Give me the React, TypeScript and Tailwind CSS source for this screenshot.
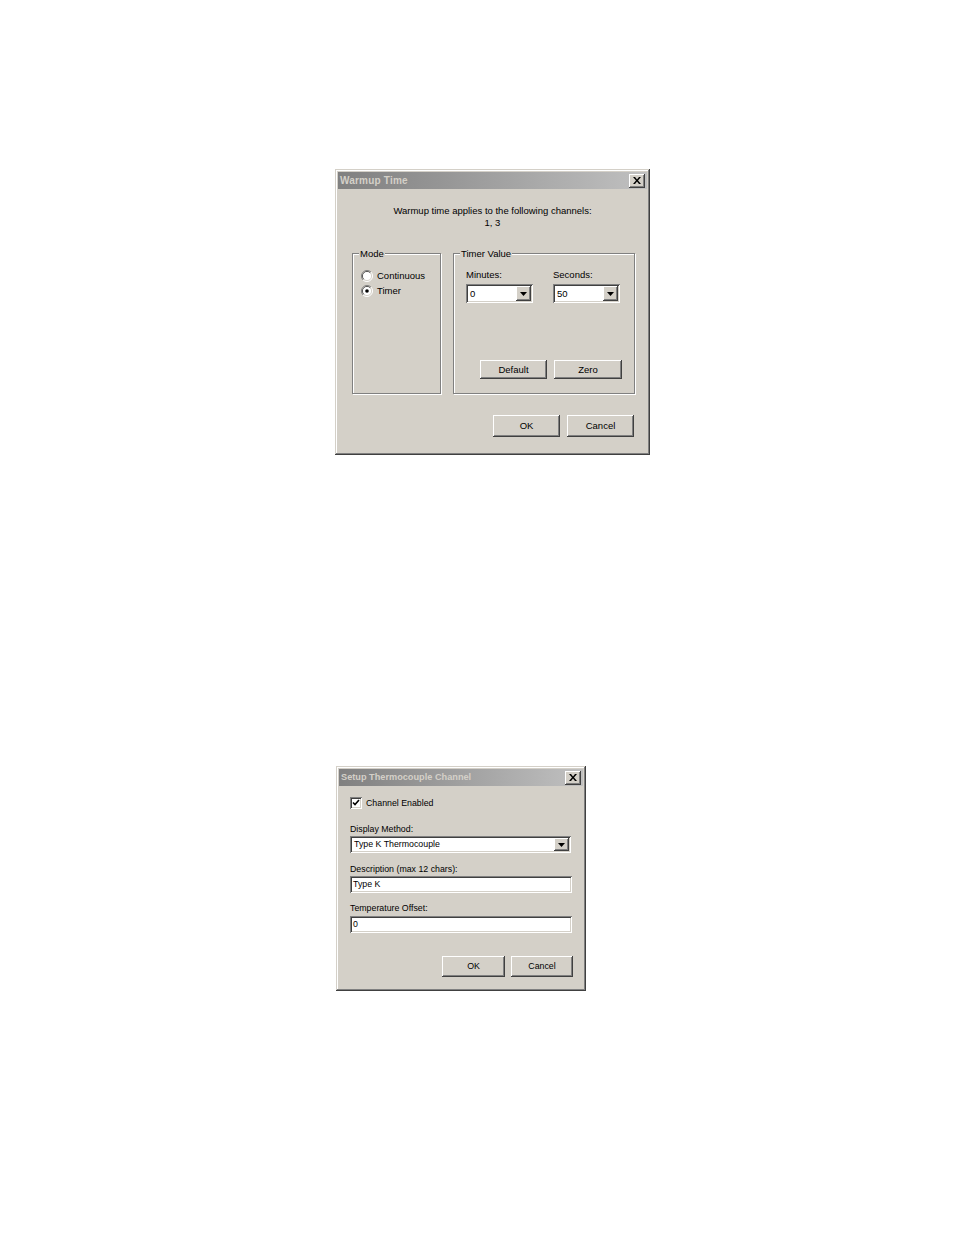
import React from "react";

const raised =
  "shadow-[inset_-1px_-1px_0_#404040,inset_1px_1px_0_#ffffff,inset_-2px_-2px_0_#808080,inset_2px_2px_0_#d4d0c8]";
const windowFrame =
  "shadow-[inset_-1px_-1px_0_#404040,inset_1px_1px_0_#d4d0c8,inset_-2px_-2px_0_#808080,inset_2px_2px_0_#ffffff]";
const sunken =
  "shadow-[inset_1px_1px_0_#808080,inset_-1px_-1px_0_#ffffff,inset_2px_2px_0_#404040,inset_-2px_-2px_0_#d4d0c8]";

function TitleBar({ title, size }: { title: string; size: string }) {
  return (
    <div className="flex h-[17px] items-center justify-between bg-[linear-gradient(to_right,#808080,#c0c0c0)] pl-[2px] pr-[2px]">
      <span className={`font-bold leading-none text-[#d4d0c8] ${size}`}>{title}</span>
      <div className={`flex h-[14px] w-[16px] items-center justify-center bg-[#d4d0c8] ${raised}`}>
        <svg width="8" height="7" viewBox="0 0 8 7">
          <path d="M0 0h2l2 2.5L6 0h2L5 3.5 8 7H6L4 4.5 2 7H0l3-3.5z" fill="#000" />
        </svg>
      </div>
    </div>
  );
}

function Button({ label, w, h }: { label: string; w: string; h: string }) {
  return (
    <div className={`flex items-center justify-center bg-[#d4d0c8] ${raised} ${w} ${h}`}>
      <span className="leading-none">{label}</span>
    </div>
  );
}

function Arrow() {
  return (
    <svg width="7" height="4" viewBox="0 0 7 4">
      <path d="M0 0h7L3.5 4z" fill="#000" />
    </svg>
  );
}

function Combo({ value, w, h }: { value: string; w: string; h: string }) {
  return (
    <div className={`flex items-stretch bg-white p-[2px] ${sunken} ${w} ${h}`}>
      <div className="flex flex-1 items-center pl-[2px] leading-none">{value}</div>
      <div className={`flex w-[15px] items-center justify-center bg-[#d4d0c8] ${raised}`}>
        <Arrow />
      </div>
    </div>
  );
}

function Field({ value }: { value: string }) {
  return (
    <div className={`flex h-[17px] w-[222px] items-center bg-white pl-[3px] ${sunken}`}>
      <span className="leading-none">{value}</span>
    </div>
  );
}

function GroupBox({
  label,
  w,
  children,
}: {
  label: string;
  w: string;
  children?: React.ReactNode;
}) {
  return (
    <div
      className={`relative h-[141px] border border-[#808080] shadow-[1px_1px_0_#ffffff,inset_1px_1px_0_#ffffff] ${w}`}
    >
      <span className="absolute left-[6px] top-[-6px] bg-[#d4d0c8] px-[1px] leading-[11px]">{label}</span>
      {children}
    </div>
  );
}

function Radio({ checked, label }: { checked?: boolean; label: string }) {
  return (
    <div className="flex h-[15px] items-center gap-[4px]">
      <svg width="12" height="12" viewBox="0 0 12 12">
        <path d="M10 2.1A5.5 5.5 0 0 0 2.1 10" stroke="#808080" fill="none" />
        <path d="M9.2 2.9A4.4 4.4 0 0 0 2.9 9.2" stroke="#404040" fill="none" />
        <path d="M2 9.9A5.5 5.5 0 0 0 9.9 2" stroke="#ffffff" fill="none" />
        <circle cx="6" cy="6" r="4" fill="#ffffff" />
        {checked && <circle cx="6" cy="6" r="1.8" fill="#000" />}
      </svg>
      <span className="leading-none">{label}</span>
    </div>
  );
}

export default function App() {
  return (
    <div
      className="min-h-[1235px] w-[954px] bg-white text-black"
      style={{ fontFamily: '"Liberation Sans", Arial, sans-serif' }}
    >
      <div className="h-[169px]" />
      {/* Warmup Time dialog */}
      <div className={`ml-[335px] h-[286px] w-[315px] bg-[#d4d0c8] p-[3px] text-[9.5px] ${windowFrame}`}>
        <TitleBar title="Warmup Time" size="text-[10px] tracking-[0.2px]" />
        <div className="mt-[16px] flex flex-col items-center leading-[12px]">
          <span>Warmup time applies to the following channels:</span>
          <span>1, 3</span>
        </div>
        <div className="mt-[24px] flex gap-[12px] pl-[14px]">
          <GroupBox label="Mode" w="w-[89px]">
            <div className="flex flex-col pl-[8px] pt-[14px]">
              <Radio label="Continuous" />
              <Radio label="Timer" checked />
            </div>
          </GroupBox>
          <GroupBox label="Timer Value" w="w-[182px]">
            <div className="flex gap-[20px] pl-[12px] pt-[15px]">
              <div className="flex flex-col gap-[4px]">
                <span className="leading-[11px]">Minutes:</span>
                <Combo value="0" w="w-[67px]" h="h-[19px]" />
              </div>
              <div className="flex flex-col gap-[4px]">
                <span className="leading-[11px]">Seconds:</span>
                <Combo value="50" w="w-[67px]" h="h-[19px]" />
              </div>
            </div>
            <div className="mt-[57px] flex gap-[7px] pl-[26px]">
              <Button label="Default" w="w-[67px]" h="h-[19px]" />
              <Button label="Zero" w="w-[68px]" h="h-[19px]" />
            </div>
          </GroupBox>
        </div>
        <div className="mt-[21px] flex justify-end gap-[7px] pr-[13px]">
          <Button label="OK" w="w-[67px]" h="h-[22px]" />
          <Button label="Cancel" w="w-[67px]" h="h-[22px]" />
        </div>
      </div>

      <div className="h-[311px]" />

      {/* Setup Thermocouple Channel dialog */}
      <div className={`ml-[336px] h-[225px] w-[250px] bg-[#d4d0c8] p-[3px] text-[8.8px] ${windowFrame}`}>
        <TitleBar title="Setup Thermocouple Channel" size="text-[9.2px]" />
        <div className="flex flex-col pl-[11px]">
          <div className="mt-[11px] flex items-center gap-[4px]">
            <div className={`flex h-[12px] w-[12px] items-center justify-center bg-white ${sunken}`}>
              <svg width="8" height="8" viewBox="0 0 8 8">
                <path d="M1 3.5l2 2 4-4.5" stroke="#000" strokeWidth="1.6" fill="none" />
              </svg>
            </div>
            <span className="leading-none">Channel Enabled</span>
          </div>
          <span className="mt-[15px] leading-[11px]">Display Method:</span>
          <div className="mt-[1px]">
            <Combo value="Type K Thermocouple" w="w-[221px]" h="h-[17px]" />
          </div>
          <span className="mt-[11px] leading-[11px]">Description (max 12 chars):</span>
          <div className="mt-[1px]">
            <Field value="Type K" />
          </div>
          <span className="mt-[10px] leading-[11px]">Temperature Offset:</span>
          <div className="mt-[2px]">
            <Field value="0" />
          </div>
        </div>
        <div className="mt-[23px] flex justify-end gap-[6px] pr-[10px]">
          <Button label="OK" w="w-[63px]" h="h-[21px]" />
          <Button label="Cancel" w="w-[62px]" h="h-[21px]" />
        </div>
      </div>
    </div>
  );
}
